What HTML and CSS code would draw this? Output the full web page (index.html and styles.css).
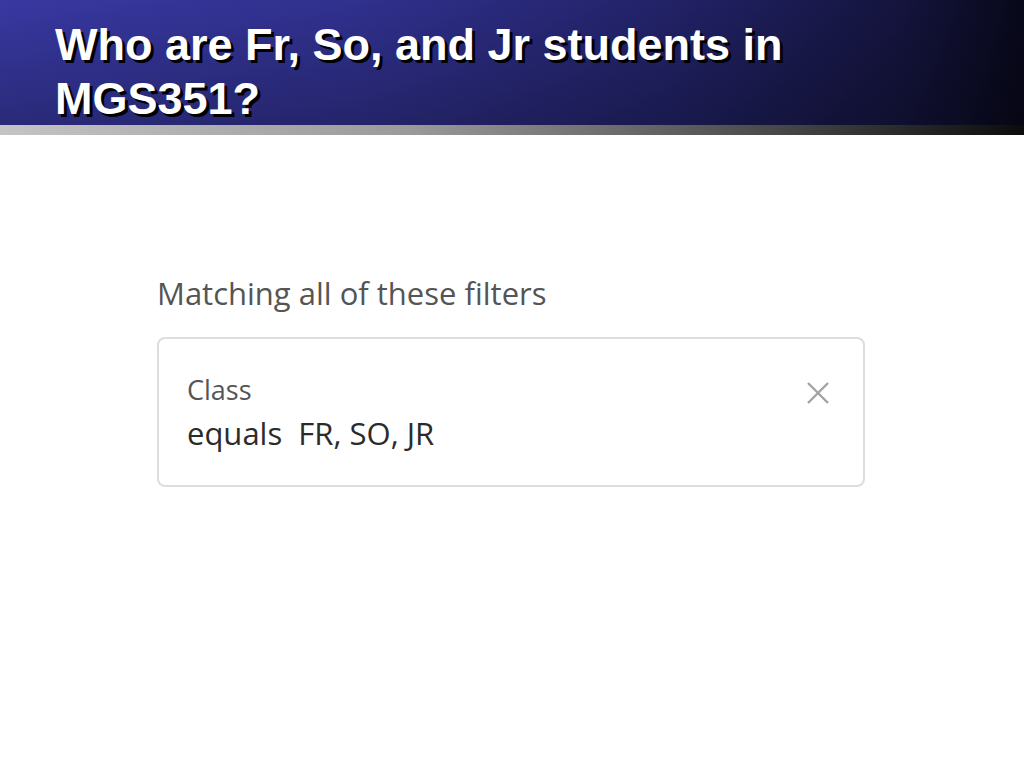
FILE: index.html
```html
<!DOCTYPE html>
<html lang="en">
<head>
  <meta charset="UTF-8" />
  <meta name="viewport" content="width=device-width, initial-scale=1.0"/>
  <title>Who are Fr, So, and Jr students in MGS351?</title>
  <link rel="stylesheet" href="styles.css">
</head>
<body>
  <div class="slide">
    <div class="title-bar">
      <h1>Who are Fr, So, and Jr students in<br>MGS351?</h1>
    </div>
    <div class="title-rule"></div>

    <div class="content">
      <p class="filter-label">Matching all of these filters</p>
      <div class="filter-card">
        <div class="filter-text">
          <div class="filter-field">Class</div>
          <div class="filter-value">equals&nbsp; FR, SO, JR</div>
        </div>
        <button class="remove-btn" aria-label="Remove filter">
          <svg width="26" height="26" viewBox="0 0 26 26">
            <path d="M3 3 L23 23 M23 3 L3 23" stroke="#a3a3a3" stroke-width="2.4" fill="none"/>
          </svg>
        </button>
      </div>
    </div>
  </div>
</body>
</html>
```

FILE: styles.css
```css
body {
  margin: 0;
  padding: 0;
  background-color: #fff;
  font-family: 'Liberation Sans', Arial, sans-serif;
}

.slide {
  width: 1024px;
  height: 768px;
  overflow: hidden;
}

.title-bar {
  height: 125px;
  box-sizing: border-box;
  padding: 18px 0 0 55px;
  background:
    linear-gradient(to bottom, rgba(0, 0, 0, 0) 0%, rgba(0, 0, 0, 0.25) 100%),
    linear-gradient(to right, #3838a2 0%, #30308e 35%, #222268 65%, #14143e 88%, #08081a 100%);
}

h1 {
  margin: 0;
  font-size: 45px;
  line-height: 54px;
  font-weight: bold;
  color: #fff;
  text-shadow: 3px 3px 0 #000;
}

.title-rule {
  height: 10px;
  background: linear-gradient(to right, #c4c4c4 0%, #9a9a9a 40%, #4a4a4a 75%, #0c0c0c 100%);
}

.content {
  padding: 137px 0 0 157px;
  font-family: 'Open Sans', Lato, sans-serif;
}

.filter-label {
  margin: 0 0 23px 0;
  font-size: 31px;
  color: #555;
}

.filter-card {
  width: 708px;
  height: 150px;
  box-sizing: border-box;
  border: 2px solid #dddddd;
  border-radius: 8px;
  padding: 32px 32px 0 28px;
  display: flex;
  justify-content: space-between;
  align-items: flex-start;
}

.filter-field {
  font-size: 27px;
  color: #555;
}

.filter-value {
  margin-top: 4px;
  font-size: 31px;
  color: #2b2b2b;
}

.remove-btn {
  margin-top: 9px;
  padding: 0;
  border: none;
  background: none;
  cursor: pointer;
}
```
